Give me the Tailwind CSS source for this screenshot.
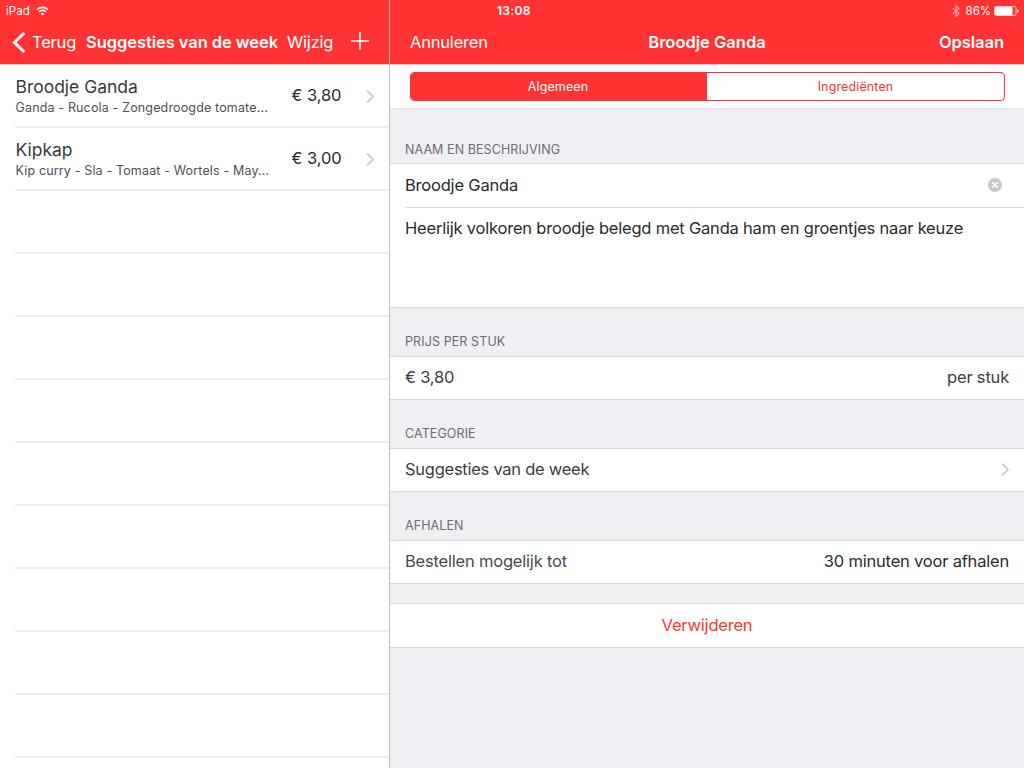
<!DOCTYPE html>
<html lang="nl"><head><meta charset="utf-8"><title>Broodje Ganda</title>
<script src="https://cdn.jsdelivr.net/npm/@tailwindcss/browser@4"></script></head>
<body class="w-[1024px] h-[768px] overflow-hidden bg-white font-['Inter','Liberation_Sans',sans-serif] text-[16.5px] leading-5 tracking-[-.2px] text-[#2b2b2b] whitespace-nowrap">
<div class="relative flex h-[768px]">
  <div class="absolute top-0 left-0 w-full h-5 flex items-center text-white text-[11.5px] tracking-[.05px] pt-px">
    <span class="ml-[6px]">iPad</span>
    <svg class="ml-[6px] w-[13px] h-[10px]" viewBox="0 0 12 10" fill="none" stroke="#fff" stroke-width="1.6"><path d="M.6 3.6a7.7 7.7 0 0 1 10.8 0M2.6 5.8a4.8 4.8 0 0 1 6.8 0"/><path d="M6 9.6 4.1 7.6a2.7 2.7 0 0 1 3.8 0z" fill="#fff" stroke="none"/></svg>
    <span class="absolute left-[497px] font-semibold text-[12px] tracking-[.3px]">13:08</span>
    <svg class="ml-auto mr-[6px] w-[8px] h-3" viewBox="0 0 8 12" fill="none" stroke="#ffa3a3" stroke-width="1.2"><path d="M.8 3.2 7 8.6 4 11.3V.7L7 3.4.8 8.8"/></svg>
    <span class="mr-[3px] tracking-[-.05px]">86%</span>
    <svg class="mr-[5px] w-[25px] h-[10px]" viewBox="0 0 25 10"><rect x=".5" y=".5" width="21.5" height="9" rx="1.8" fill="none" stroke="#fff" stroke-opacity=".75"/><rect x="1" y="1" width="17.5" height="8" rx=".8" fill="#fff"/><path d="M23.2 3.2q1.4.4 1.4 1.8t-1.4 1.8z" fill="#fff"/></svg>
  </div>
  <aside class="w-[390px] shrink-0 border-r border-[#bcbcbc] bg-white">
    <header class="h-[65px] pt-[32px] bg-[#ff3333] border-b border-[#ffcaca] text-white flex items-start">
      <svg class="ml-3 w-[14px] h-[21px]" viewBox="0 0 14 21" fill="none" stroke="#fff" stroke-width="2.9"><path d="M12.2 1 2.4 10.5l9.8 9.5"/></svg>
      <span class="ml-[6px] w-[54px]">Terug</span>
      <span class="w-[201px] font-semibold tracking-[-.06px]">Suggesties van de week</span>
      <span>Wijzig</span>
      <svg class="ml-auto mr-[20px] w-[18px] h-[18px]" viewBox="0 0 18 18" stroke="#fff" stroke-width="1.5"><path d="M0 9h18M9 0v18"/></svg>
    </header>
    <div class="h-[63px] relative flex pl-[15px]">
      <div class="w-[276.5px] pt-3 pl-[.5px]"><div class="text-[17.5px] leading-5 tracking-[-.02px] text-[#3a3a3a]">Broodje Ganda</div><div class="text-[12.5px] leading-[22px] tracking-[.15px] text-[#505050]">Ganda - Rucola - Zongedroogde tomate...</div></div>
      <span class="pt-[20px] tracking-[-.1px]">€ 3,80</span>
      <svg class="absolute left-[366px] top-[24.5px] w-2 h-[13px]" viewBox="0 0 8 13" fill="none" stroke="#c7c7cc" stroke-width="1.7"><path d="m1 .7 6 5.8-6 5.8"/></svg>
      <i class="absolute left-[15px] right-0 bottom-0 h-[2px] bg-[#eeeeee]"></i>
    </div>
    <div class="h-[63px] relative flex pl-[15px]">
      <div class="w-[276.5px] pt-3 pl-[.5px]"><div class="text-[17.5px] leading-5 tracking-[-.02px] text-[#3a3a3a]">Kipkap</div><div class="text-[12.5px] leading-[22px] tracking-[.15px] text-[#505050]">Kip curry - Sla - Tomaat - Wortels - May...</div></div>
      <span class="pt-[20px] tracking-[-.1px]">€ 3,00</span>
      <svg class="absolute left-[366px] top-[24.5px] w-2 h-[13px]" viewBox="0 0 8 13" fill="none" stroke="#c7c7cc" stroke-width="1.7"><path d="m1 .7 6 5.8-6 5.8"/></svg>
      <i class="absolute left-[15px] right-0 bottom-0 h-[2px] bg-[#eeeeee]"></i>
    </div>
    <div class="ml-[15px]">
      <div class="h-[63px] border-b-2 border-[#eeeeee]"></div><div class="h-[63px] border-b-2 border-[#eeeeee]"></div><div class="h-[63px] border-b-2 border-[#eeeeee]"></div>
      <div class="h-[63px] border-b-2 border-[#eeeeee]"></div><div class="h-[63px] border-b-2 border-[#eeeeee]"></div><div class="h-[63px] border-b-2 border-[#eeeeee]"></div>
      <div class="h-[63px] border-b-2 border-[#eeeeee]"></div><div class="h-[63px] border-b-2 border-[#eeeeee]"></div><div class="h-[63px] border-b-2 border-[#eeeeee]"></div>
    </div>
  </aside>
  <main class="flex-1 bg-[#efeff4]">
    <header class="h-[65px] pt-[32px] pl-5 pr-5 bg-[#ff3333] border-b border-[#ffcaca] text-white grid grid-cols-3">
      <span>Annuleren</span><span class="text-center font-semibold tracking-normal">Broodje Ganda</span><span class="text-right font-semibold tracking-[-.05px]">Opslaan</span>
    </header>
    <div class="h-[43px] pt-[7px] pl-5 pr-[19px] bg-white">
      <div class="h-[29px] flex border border-[#ff3333] rounded-[4px] overflow-hidden text-[12.5px] leading-[28px] tracking-[.13px] text-center">
        <span class="w-[296px] pr-[2px] bg-[#ff3333] text-white">Algemeen</span><span class="flex-1 text-[#ff3333]">Ingrediënten</span>
      </div>
    </div>
    <h2 class="h-[56px] border-t border-b border-t-[#e3e3e8] border-[#dadadd] pl-[15px] pt-[31px] text-[12.5px] leading-[19px] tracking-[.08px] text-[#6d6d72]">NAAM EN BESCHRIJVING</h2>
    <div class="h-[43px] bg-white pl-[15px] pr-[22px] flex justify-between"><span class="pt-[11px]">Broodje Ganda</span>
      <svg class="mt-[14px] w-[14px] h-[14px]" viewBox="0 0 14 14"><circle cx="7" cy="7" r="7" fill="#c8c8cb"/><path d="m4.2 4.2 5.6 5.6m0-5.6L4.2 9.8" stroke="#fff" stroke-width="1.6"/></svg></div>
    <div class="h-[100px] bg-white pl-[15px]"><div class="border-t border-[#dcdcdf] h-full pt-[10px] tracking-[-.205px]">Heerlijk volkoren broodje belegd met Ganda ham en groentjes naar keuze</div></div>
    <h2 class="h-[50px] border-y border-[#dadadd] pl-[15px] pt-[24px] text-[12.5px] tracking-[.1px] text-[#6d6d72]">PRIJS PER STUK</h2>
    <div class="h-[42px] bg-white pl-[15px] pr-[15px] pt-[10px] flex justify-between text-[#3c3c3c]"><span>€ 3,80</span><span>per stuk</span></div>
    <h2 class="h-[50px] border-y border-[#dadadd] pl-[15px] pt-[24px] text-[12.5px] tracking-[.1px] text-[#6d6d72]">CATEGORIE</h2>
    <div class="h-[42px] bg-white pl-[15px] pr-[15px] pt-[10px] flex justify-between text-[#3c3c3c]"><span class="tracking-[-.26px]">Suggesties van de week</span>
      <svg class="mt-[4px] w-2 h-[13px]" viewBox="0 0 8 13" fill="none" stroke="#c7c7cc" stroke-width="1.7"><path d="m1 .7 6 5.8-6 5.8"/></svg></div>
    <h2 class="h-[50px] border-y border-[#dadadd] pl-[15px] pt-[24px] text-[12.5px] tracking-[.1px] text-[#6d6d72]">AFHALEN</h2>
    <div class="h-[42px] bg-white pl-[15px] pr-[15px] pt-[10px] flex justify-between"><span class="text-[#4a4a4a]">Bestellen mogelijk tot</span><span>30 minuten voor afhalen</span></div>
    <div class="h-[21px] border-y border-[#dadadd]"></div>
    <div class="h-[44px] bg-white border-b border-[#dadadd] pt-[11px] text-center text-[#ff3333]">Verwijderen</div>
  </main>
</div>
</body></html>
